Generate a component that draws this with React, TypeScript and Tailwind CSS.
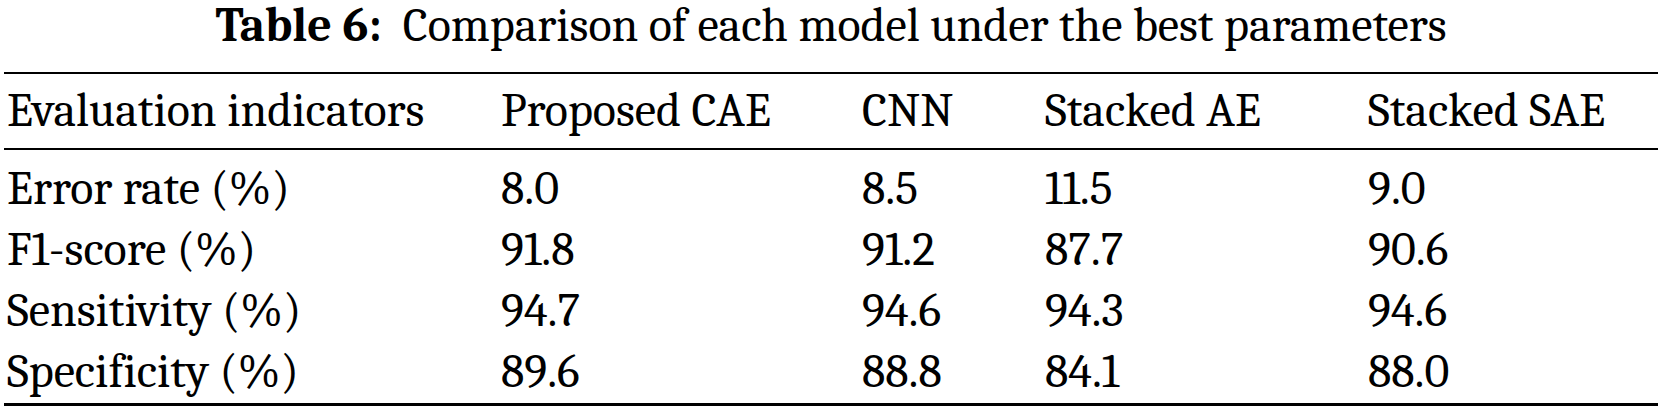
import React from "react";

const headers = ["Evaluation indicators", "Proposed CAE", "CNN", "Stacked AE", "Stacked SAE"];

const rows = [
  ["Error rate (%)", "8.0", "8.5", "11.5", "9.0"],
  ["F1-score (%)", "91.8", "91.2", "87.7", "90.6"],
  ["Sensitivity (%)", "94.7", "94.6", "94.3", "94.6"],
  ["Specificity (%)", "89.6", "88.8", "84.1", "88.0"],
];

const cols = "grid grid-cols-[494px_361px_183px_323px_1fr] pl-[3px]";

export default function App() {
  return (
    <div className="w-[1662px] h-[412px] bg-white text-black font-serif text-[48px]">
      <div className="h-[52px] leading-[52px] text-center mb-[20px] whitespace-pre">
        <b>Table 6:</b>
        {"  "}Comparison of each model under the best parameters
      </div>

      <div className="mx-1">
        <div className="border-t-2 border-black pt-[6px] pb-[7px]">
          <div className={cols + " leading-[61px]"}>
            {headers.map((h) => (
              <div key={h} className="whitespace-nowrap">
                {h}
              </div>
            ))}
          </div>
        </div>

        <div className="border-t-2 border-b-[3px] border-black pt-[8px] pb-[1px]">
          {rows.map((r) => (
            <div key={r[0]} className={cols + " leading-[61px]"}>
              {r.map((c, i) => (
                <div key={i} className="whitespace-nowrap">
                  {c}
                </div>
              ))}
            </div>
          ))}
        </div>
      </div>
    </div>
  );
}
